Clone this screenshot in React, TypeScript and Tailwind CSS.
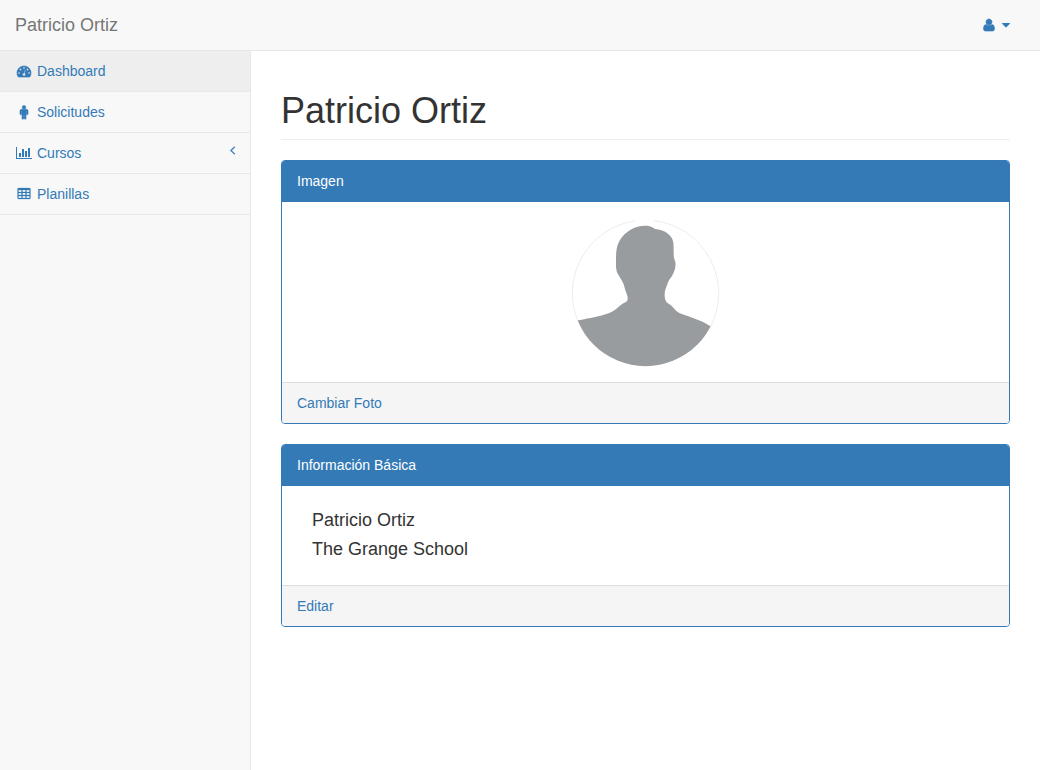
import type { ReactNode } from "react";

type IconProps = { d: string; viewBox?: string; className?: string };

function Icon({ d, viewBox = "0 0 1792 1792", className = "h-3.5 w-3.5" }: IconProps) {
  return (
    <svg viewBox={viewBox} className={`shrink-0 fill-current ${className}`} aria-hidden="true">
      <path d={d} fillRule="evenodd" />
    </svg>
  );
}

const GAUGE =
  "M384 1152q0-53-37.5-90.5t-90.5-37.5-90.5 37.5-37.5 90.5 37.5 90.5 90.5 37.5 90.5-37.5 37.5-90.5zm192-448q0-53-37.5-90.5t-90.5-37.5-90.5 37.5-37.5 90.5 37.5 90.5 90.5 37.5 90.5-37.5 37.5-90.5zm428 481l101-382q6-26-7.5-48.5t-38.5-29.5-48 6.5-30 39.5l-101 382q-60 5-107 43.5t-63 98.5q-20 77 20 146t117 89 146-20 89-117q16-60-6-117t-72-91zm660-33q0-53-37.5-90.5t-90.5-37.5-90.5 37.5-37.5 90.5 37.5 90.5 90.5 37.5 90.5-37.5 37.5-90.5zm-640-640q0-53-37.5-90.5t-90.5-37.5-90.5 37.5-37.5 90.5 37.5 90.5 90.5 37.5 90.5-37.5 37.5-90.5zm448 192q0-53-37.5-90.5t-90.5-37.5-90.5 37.5-37.5 90.5 37.5 90.5 90.5 37.5 90.5-37.5 37.5-90.5zm320 448q0 261-141 483-19 29-54 29h-1402q-35 0-54-29-141-221-141-483 0-182 71-348t191-286 286-191 348-71 348 71 286 191 191 286 71 348z";
const PERSON =
  "M1408 736v416q0 40-28 68t-68 28-68-28-28-68v-352h-64v912q0 46-33 79t-79 33-79-33-33-79v-464h-64v464q0 46-33 79t-79 33-79-33-33-79v-912h-64v352q0 40-28 68t-68 28-68-28-28-68v-416q0-80 56-136t136-56h640q80 0 136 56t56 136zm-288-448q0 93-65.5 158.5t-158.5 65.5-158.5-65.5-65.5-158.5 65.5-158.5 158.5-65.5 158.5 65.5 65.5 158.5z";
const BARS =
  "M640 896v512h-256v-512h256zm384-512v1024h-256v-1024h256zm1024 1152v128h-2048v-1536h128v1408h1920zm-640-896v768h-256v-768h256zm384-384v1152h-256v-1152h256z";
const USER =
  "M1408 1405q0 120-73 189.5t-194 69.5h-874q-121 0-194-69.5t-73-189.5q0-53 3.5-103.5t14-109 26.5-108.5 43-97.5 62-81 85.5-53.5 111.5-20q9 0 42 21.5t74.5 48 108 48 133.5 21.5 133.5-21.5 108-48 74.5-48 42-21.5q61 0 111.5 20t85.5 53.5 62 81 43 97.5 26.5 108.5 14 109 3.5 103.5zM1088 512q0 159-112.5 271.5t-271.5 112.5-271.5-112.5-112.5-271.5 112.5-271.5 271.5-112.5 271.5 112.5 112.5 271.5z";
const CARET =
  "M1408 704q0 26-19 45l-448 448q-19 19-45 19t-45-19l-448-448q-19-19-19-45t19-45 45-19h896q26 0 45 19t19 45z";
const ANGLE_LEFT =
  "M1203 544q0 13-10 23l-393 393 393 393q10 10 10 23t-10 23l-50 50q-10 10-23 10t-23-10l-466-466q-10-10-10-23t10-23l466-466q10-10 23-10t23 10l50 50q10 10 10 23z";

function cell(x: number, y: number) {
  return `M${x} ${y}v192q0 14 9 23t23 9h320q14 0 23-9t9-23v-192q0-14-9-23t-23-9h-320q-14 0-23 9t-9 23z`;
}

const TABLE =
  "M224 128h1344q66 0 113 47t47 113v1088q0 66-47 113t-113 47h-1344q-66 0-113-47t-47-113v-1088q0-66 47-113t113-47z" +
  [192, 704, 1216].flatMap((x) => [416, 800, 1184].map((y) => cell(x, y))).join("");

const BOLD = "h-3.5 w-3.5 overflow-visible stroke-current stroke-[80]";

function NavItem({
  icon,
  label,
  active = false,
  expandable = false,
}: {
  icon: ReactNode;
  label: string;
  active?: boolean;
  expandable?: boolean;
}) {
  return (
    <li className="border-b border-[#e7e7e7]">
      <a
        href="#"
        className={`flex items-center gap-1 px-[15px] py-2.5 leading-5 hover:bg-[#eee] ${active ? "bg-[#eee]" : ""}`}
      >
        <span className="flex w-[18px] shrink-0 justify-center">{icon}</span>
        {label}
        {expandable && (
          <Icon
            d={ANGLE_LEFT}
            viewBox="576 0 640 1792"
            className="ml-auto h-3.5 w-[5px] self-start overflow-visible stroke-current stroke-[40]"
          />
        )}
      </a>
    </li>
  );
}

function Panel({ title, action, children }: { title: string; action: string; children: ReactNode }) {
  return (
    <section className="mb-5 overflow-hidden rounded border border-[#337ab7] bg-white">
      <h2 className="border-b border-[#337ab7] bg-[#337ab7] px-[15px] py-2.5 leading-5 text-white">{title}</h2>
      <div className="p-[15px]">{children}</div>
      <div className="border-t border-[#ddd] bg-[#f5f5f5] px-[15px] py-2.5 leading-5">
        <a href="#" className="text-[#337ab7] hover:underline">
          {action}
        </a>
      </div>
    </section>
  );
}

function Avatar() {
  return (
    <svg viewBox="33 36 447 450" className="mx-auto h-[150px] w-[149px]" role="img" aria-label="Patricio Ortiz">
      <defs>
        <clipPath id="avatar-circle">
          <circle cx="256.5" cy="264" r="219.5" />
        </clipPath>
      </defs>
      <path
        d="M225 47.8A219.5 219.5 0 0 0 52.9 347M282 47A219.5 219.5 0 0 1 452.4 364"
        fill="none"
        stroke="#ececec"
        strokeWidth="3"
      />
      <path
        clipPath="url(#avatar-circle)"
        fill="#999c9f"
        d="M20 354L56 346C90 338 130 333 156 320C172 312 180 300 190 295C198 291 203 289 203 282C204 270 196 260 194 248C191 232 182 222 174 208C167 197 168 184 168 166C168 138 170 122 180 105C195 80 224 62 256 62C278 62 278 70 290 73C305 75 320 80 331 93C342 106 341 120 341 142C341 158 343 164 346 170C348 185 345 196 338 209C332 220 326 224 323 235C318 250 313 258 314 272C315 284 317 291 327 297C340 305 347 319 360 325C390 337 425 346 450 363L490 385V500H20Z"
      />
    </svg>
  );
}

export default function App() {
  return (
    <div className="flex min-h-screen flex-col bg-white font-['Liberation_Sans',Arial,sans-serif] text-sm text-[#333]">
      <header className="flex items-center justify-between border-b border-[#e7e7e7] bg-[#f8f8f8] px-[15px]">
        <a href="#" className="py-[15px] text-lg leading-5 text-[#777]">
          Patricio Ortiz
        </a>
        <button
          type="button"
          aria-label="Menú de usuario"
          className="flex items-center gap-1 px-[15px] py-[18px] text-[#337ab7]"
        >
          <span className="flex w-[18px] justify-center">
            <Icon
              d={USER}
              viewBox="-64 0 1536 1792"
              className="h-3.5 w-3 overflow-visible stroke-current stroke-[80]"
            />
          </span>
          <Icon d={CARET} viewBox="384 0 1024 1792" className="h-3.5 w-2" />
        </button>
      </header>
      <div className="flex flex-1">
        <nav className="w-[251px] shrink-0 border-r border-[#e7e7e7] bg-[#f8f8f8] text-[#337ab7]">
          <ul>
            <NavItem active label="Dashboard" icon={<Icon d={GAUGE} className={BOLD} />} />
            <NavItem label="Solicitudes" icon={<Icon d={PERSON} className={BOLD} />} />
            <NavItem
              expandable
              label="Cursos"
              icon={<Icon d={BARS} viewBox="0 0 2048 1792" className="h-3.5 w-4" />}
            />
            <NavItem
              label="Planillas"
              icon={
                <Icon d={TABLE} className="h-3.5 w-3.5 overflow-visible stroke-current stroke-[30]" />
              }
            />
          </ul>
        </nav>
        <main className="min-w-0 flex-1 px-[30px]">
          <h1 className="mb-5 mt-10 border-b border-[#eee] pb-[9px] text-4xl leading-[39px]">Patricio Ortiz</h1>
          <Panel title="Imagen" action="Cambiar Foto">
            <Avatar />
          </Panel>
          <Panel title="Información Básica" action="Editar">
            <div className="flex flex-col gap-[9px] px-[15px] pb-[11px] pt-[9px] text-lg leading-5">
              <p>Patricio Ortiz</p>
              <p>The Grange School</p>
            </div>
          </Panel>
        </main>
      </div>
    </div>
  );
}
